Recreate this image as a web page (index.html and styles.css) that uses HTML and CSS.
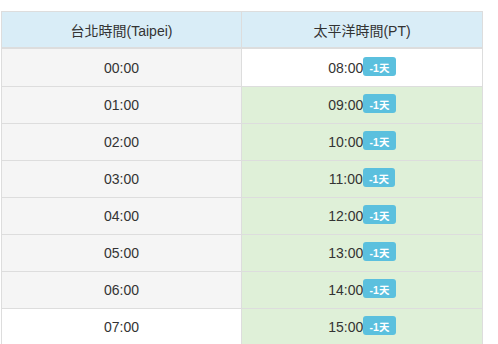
FILE: index.html
```html
<!DOCTYPE html>
<html>
<head>
<meta charset="utf-8">
<link rel="stylesheet" href="styles.css">
</head>
<body>
<div class="tbl">
  <div class="row head">
    <div class="cell">台北時間(Taipei)</div>
    <div class="cell">太平洋時間(PT)</div>
  </div>
  <div class="row">
    <div class="cell gray">00:00</div>
    <div class="cell">08:00<span class="lbl">-1天</span></div>
  </div>
  <div class="row">
    <div class="cell gray">01:00</div>
    <div class="cell green">09:00<span class="lbl">-1天</span></div>
  </div>
  <div class="row">
    <div class="cell gray">02:00</div>
    <div class="cell green">10:00<span class="lbl">-1天</span></div>
  </div>
  <div class="row">
    <div class="cell gray">03:00</div>
    <div class="cell green">11:00<span class="lbl">-1天</span></div>
  </div>
  <div class="row">
    <div class="cell gray">04:00</div>
    <div class="cell green">12:00<span class="lbl">-1天</span></div>
  </div>
  <div class="row">
    <div class="cell gray">05:00</div>
    <div class="cell green">13:00<span class="lbl">-1天</span></div>
  </div>
  <div class="row">
    <div class="cell gray">06:00</div>
    <div class="cell green">14:00<span class="lbl">-1天</span></div>
  </div>
  <div class="row">
    <div class="cell">07:00</div>
    <div class="cell green">15:00<span class="lbl">-1天</span></div>
  </div>
</div>
</body>
</html>
```

FILE: styles.css
```css
html, body {
  margin: 0;
  padding: 0;
  background: #fff;
}
body {
  font-family: "Liberation Sans", Arial, "Noto Sans CJK TC", sans-serif;
  font-size: 14px;
  line-height: 20px;
  color: #333;
}
.tbl {
  margin: 11px 0 0 1px;
  width: 482px;
  box-sizing: border-box;
  border: 1px solid #ddd;
  border-bottom: none;
}
.row {
  display: grid;
  grid-template-columns: 240px 1fr;
  border-bottom: 1px solid #ddd;
}
.cell {
  box-sizing: border-box;
  height: 36px;
  padding: 8px 8px 0;
  text-align: center;
  white-space: nowrap;
  background: #fff;
}
.cell:first-child {
  border-right: 1px solid #ddd;
}
.head {
  border-bottom: 2px solid #ddd;
}
.head .cell {
  height: 35px;
  padding-top: 9px;
  background: #d9edf7;
}
.head + .row .cell {
  height: 37px;
  padding-top: 9px;
}
.gray { background: #f5f5f5; }
.green { background: #dff0d8; }
.lbl {
  padding: 4.85px 6.3px 2.4px;
  font-size: 10.5px;
  font-weight: bold;
  line-height: 1;
  color: #fff;
  background: #5bc0de;
  border-radius: 3px;
  vertical-align: 1.5px;
}
```
